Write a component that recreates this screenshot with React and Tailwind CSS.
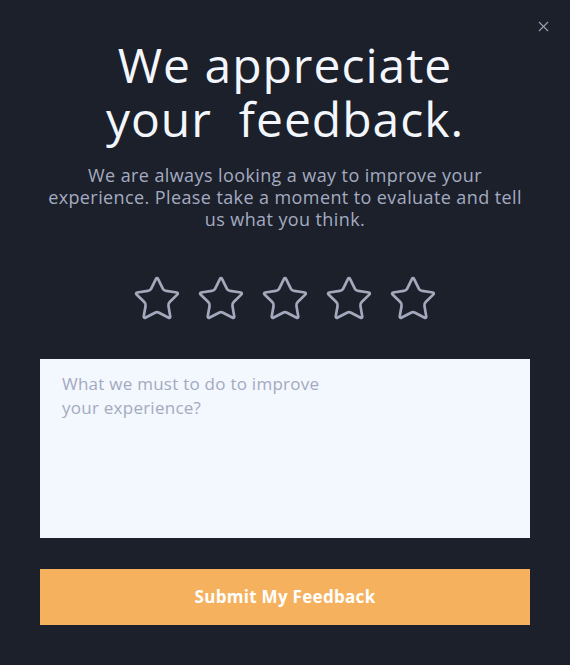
import { Star, X } from 'lucide-react';

export default function App() {
  return (
    <div className="relative min-h-[665px] w-[570px] bg-[#1b202b] px-10 pt-[38px] font-['Open_Sans',sans-serif]">
      <button className="absolute right-[18px] top-[18px] text-[#9aa1b3]">
        <X className="h-[17px] w-[17px]" strokeWidth={1.5} />
      </button>

      <h1 className="text-center text-[48px] font-normal leading-[54px] tracking-[1px] text-[#f3f6fc]">
        We appreciate
        <br />
        your&nbsp; feedback.
      </h1>

      <p className="mt-[18px] text-center text-[18px] leading-[22px] tracking-[0.4px] text-[#a5abc0]">
        We are always looking a way to improve your
        <br />
        experience. Please take a moment to evaluate and tell
        <br />
        us what you think.
      </p>

      <div className="mt-[44px] flex justify-center gap-[14px]">
        {[0, 1, 2, 3, 4].map((i) => (
          <Star key={i} className="h-[50px] w-[50px] text-[#a3a9bb]" strokeWidth={1.3} />
        ))}
      </div>

      <textarea
        className="mt-[35px] block h-[179px] w-full resize-none bg-[#f3f7fe] px-[22px] py-[13px] text-[17px] leading-[24px] tracking-[0.25px] text-[#1b202b] outline-none placeholder:text-[#a3aac0]"
        placeholder={'What we must to do to improve\nyour experience?'}
      />

      <button className="mt-[31px] flex h-[56px] w-full items-center justify-center bg-[#f6b15e] text-[17px] font-bold tracking-[0.3px] text-white">
        Submit My Feedback
      </button>
    </div>
  );
}
